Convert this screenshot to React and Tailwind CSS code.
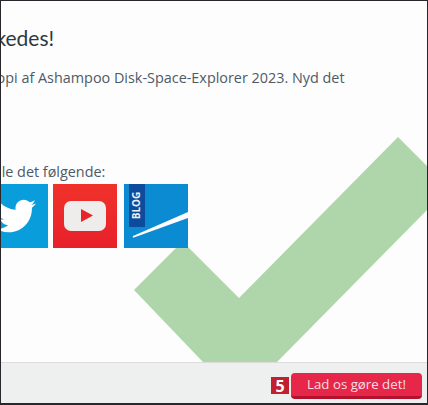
import { FaTwitter } from "react-icons/fa";

const font = { fontFamily: '"Open Sans", "Noto Sans", sans-serif' };

const App = () => {
  return (
    <div
      className="flex flex-col w-[428px] h-[405px] overflow-hidden bg-[#fdfdfd] border-t border-b-2 border-x border-[#26262c]"
      style={font}
    >
      <div className="relative flex-1 overflow-hidden">
        {/* flueben bag indholdet */}
        <svg
          className="absolute left-[-1px] top-[-1px]"
          width="428"
          height="362"
          viewBox="0 0 428 362"
        >
          <polygon
            points="134,290 182.5,241.5 239,298 398,137 432,171 432,205 277,362 203,362"
            fill="#aed6aa"
          />
        </svg>

        <div className="relative pt-[17px]">
          <h1
            className="text-[21px] leading-[40px] text-[#2b3a44] whitespace-nowrap -ml-[32px]"
            style={{ fontFamily: '"Lato", sans-serif' }}
          >
            lykkedes!
          </h1>
          <p className="mt-[8px] text-[14.4px] leading-[24px] text-[#4e5a66] whitespace-nowrap -ml-[12px]">
            kopi af Ashampoo Disk-Space-Explorer 2023. Nyd det
          </p>
          <p className="mt-[70px] text-[14.4px] leading-[24px] text-[#4e5a66] whitespace-nowrap -ml-[11px]">
            alle det følgende:
          </p>
          <div className="flex -ml-[17px]">
            <div className="flex items-center justify-center shrink-0 w-[64px] h-[64px] bg-[#0a9ddb]">
              <FaTwitter className="text-white w-[40px] h-[40px]" />
            </div>
            <div className="flex items-center justify-center shrink-0 w-[64px] h-[64px] ml-[5px] bg-gradient-to-b from-[#f0322a] to-[#e8202a]">
              <svg width="42" height="30" viewBox="0 0 42 30">
                <rect width="42" height="30" rx="7" fill="#efecec" />
                <polygon points="17,8 29,14.500 17,21" fill="#e8262a" />
              </svg>
            </div>
            <div className="relative shrink-0 w-[64px] h-[64px] ml-[7px] bg-[#0b8bd1] overflow-hidden">
              <div className="flex items-center justify-center w-[16px] h-[43px] ml-[5px] bg-[#0d4c9c]">
                <span className="-rotate-90 text-[10px] font-bold text-[#e8eef6]">BLOG</span>
              </div>
              <svg className="absolute left-0 top-0" width="64" height="64" viewBox="0 0 64 64">
                <path d="M9 52 Q8 53.500 10 53.500 L64 34 L64 28 Z" fill="#fdfdfd" />
              </svg>
            </div>
          </div>
        </div>
      </div>

      <div className="flex items-start justify-end h-[41px] bg-[#eeefef] border-t border-[#dcdcdc] pr-[5px] pt-[10px]">
        <span className="flex items-center justify-center w-[18px] h-[17px] mt-[4px] mr-[2px] bg-[#c1202f] text-[16px] font-bold text-white">
          5
        </span>
        <button className="w-[131px] h-[26px] pt-[1px] rounded-[4px] bg-[#e6274a] border-b-[3px] border-[#b3112d] text-[13.25px] text-[#f6dfe3]">
          Lad os gøre det!
        </button>
      </div>
    </div>
  );
};

export default App;
